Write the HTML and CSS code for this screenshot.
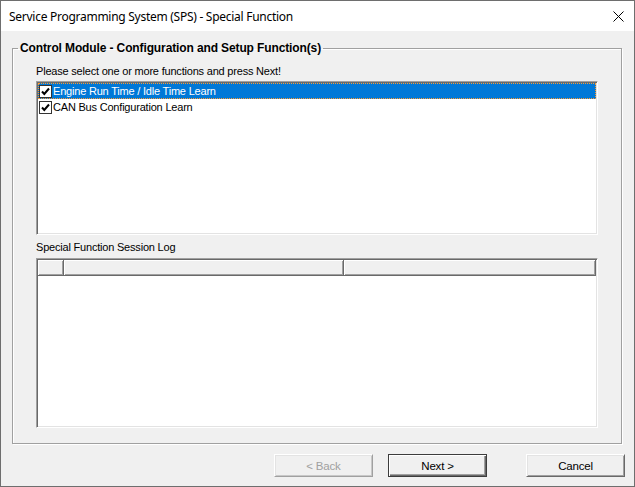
FILE: index.html
```html
<!DOCTYPE html>
<html lang="en">
<head>
  <meta charset="UTF-8">
  <title>Service Programming System (SPS) - Special Function</title>
  <link rel="stylesheet" href="styles.css">
</head>
<body>

  <div class="window">
    <div class="titlebar">
      <span class="title">Service Programming System (SPS) - Special Function</span>
      <svg class="close" width="11" height="11" viewBox="0 0 11 11">
        <path d="M0.5 0.5L10.5 10.5M10.5 0.5L0.5 10.5" stroke="#000" stroke-width="1"/>
      </svg>
    </div>

    <div class="client">
      <fieldset class="group">
        <legend>Control Module - Configuration and Setup Function(s)</legend>
        <div class="group-body">
          <div class="caption">Please select one or more functions and press Next!</div>

          <div class="listbox">
            <div class="item selected">
              <span class="check">
                <svg width="11" height="11" viewBox="0 0 11 11"><path d="M2 5.5L4.3 8L9 2.5" fill="none" stroke="#000" stroke-width="2"/></svg>
              </span>
              Engine Run Time / Idle Time Learn
            </div>
            <div class="item">
              <span class="check">
                <svg width="11" height="11" viewBox="0 0 11 11"><path d="M2 5.5L4.3 8L9 2.5" fill="none" stroke="#000" stroke-width="2"/></svg>
              </span>
              CAN Bus Configuration Learn
            </div>
          </div>

          <div class="caption log-caption">Special Function Session Log</div>

          <div class="listview">
            <div class="lv-header">
              <div class="col col-1"></div>
              <div class="col col-2"></div>
              <div class="col col-3"></div>
            </div>
          </div>
        </div>
      </fieldset>

      <div class="buttons">
        <button class="btn" disabled>&lt; Back</button>
        <button class="btn default">Next &gt;</button>
        <button class="btn cancel">Cancel</button>
      </div>
    </div>
  </div>

</body>
</html>
```

FILE: styles.css
```css
body {
  margin: 0;
  padding: 0;
  background-color: #f0f0f0;
  font-family: "Liberation Sans", Arial, sans-serif;
  font-size: 11px;
  letter-spacing: -0.2px;
  color: #000;
}

.window {
  width: 635px;
  height: 487px;
  box-sizing: border-box;
  border: 1px solid #6e6e6e;
  background-color: #f0f0f0;
  display: flex;
  flex-direction: column;
}

.titlebar {
  height: 30px;
  flex: none;
  background-color: #fff;
  display: flex;
  align-items: center;
  padding: 0 10px 0 8px;
  font-family: "Noto Sans", sans-serif;
  font-size: 12px;
  letter-spacing: -0.27px;
}

.close {
  margin-left: auto;
}

.client {
  flex: 1;
  padding: 10px 12px 0 11px;
}

.group {
  margin: 0;
  padding: 0;
  border: 1px solid #a0a0a0;
  box-shadow: inset 1px 1px 0 #fff, 1px 1px 0 #fff;
}

.group legend {
  font-size: 12px;
  font-weight: bold;
  letter-spacing: -0.12px;
  line-height: 14px;
  padding: 0 2px;
  margin-left: 5px;
}

.group-body {
  padding: 0 23px 15px 23px;
}

.caption {
  line-height: 14px;
  margin-top: 9px;
  margin-bottom: 3px;
}

.log-caption {
  margin-top: 5px;
  margin-bottom: 4px;
}

.listbox {
  height: 154px;
  box-sizing: border-box;
  background-color: #fff;
  border: 1px solid;
  border-color: #a0a0a0 #fff #fff #a0a0a0;
  box-shadow: inset 1px 1px 0 #696969, inset -1px -1px 0 #e3e3e3;
  padding: 1px;
}

.item {
  height: 16px;
  line-height: 16px;
  display: flex;
  align-items: center;
  white-space: nowrap;
}

.item.selected {
  background-color: #0078d7;
  color: #fff;
  outline: 1px dotted #ff9a2e;
  outline-offset: -1px;
}

.check {
  width: 13px;
  height: 13px;
  box-sizing: border-box;
  margin-left: 1px;
  margin-right: 1px;
  border: 1px solid #333;
  background-color: #fff;
  display: flex;
}

.listview {
  height: 170px;
  box-sizing: border-box;
  background-color: #fff;
  border: 1px solid;
  border-color: #a0a0a0 #fff #fff #a0a0a0;
  box-shadow: inset 1px 1px 0 #696969, inset -1px -1px 0 #e3e3e3;
  padding: 1px;
}

.lv-header {
  display: flex;
  height: 16px;
}

.col {
  box-sizing: border-box;
  background-color: #f0f0f0;
  border-right: 1px solid #696969;
  border-bottom: 1px solid #696969;
  box-shadow: inset 1px 1px 0 #fff, inset -1px -1px 0 #a0a0a0;
}

.col-1 {
  width: 26px;
}

.col-2 {
  width: 280px;
}

.col-3 {
  flex: 1;
}

.buttons {
  display: flex;
  justify-content: flex-end;
  margin-top: 10px;
  margin-right: -3px;
}

.btn {
  width: 99px;
  height: 23px;
  box-sizing: border-box;
  padding: 0;
  font-family: "Liberation Sans", Arial, sans-serif;
  font-size: 11.5px;
  letter-spacing: -0.2px;
  color: #000;
  background-color: #f0f0f0;
  border: 1px solid;
  border-color: #fff #696969 #696969 #fff;
  box-shadow: inset 1px 1px 0 #e3e3e3, inset -1px -1px 0 #a0a0a0;
}

.btn:disabled {
  color: #a0a0a0;
  border-color: #fff #a0a0a0 #a0a0a0 #fff;
  box-shadow: inset 1px 1px 0 #e3e3e3, inset -1px -1px 0 #c8c8c8;
}

.btn.default {
  margin-left: 15px;
  border-color: #3c3c3c;
  box-shadow: inset 1px 1px 0 #fff, inset -1px -1px 0 #696969, inset -2px -2px 0 #a0a0a0;
}

.btn.cancel {
  margin-left: 39px;
}
```
